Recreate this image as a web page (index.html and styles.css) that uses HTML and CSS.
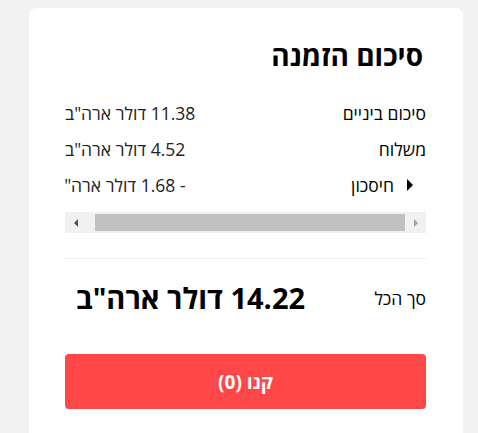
FILE: index.html
```html
<!DOCTYPE html>
<html lang="he" dir="rtl">
<head>
<meta charset="utf-8">
<title>סיכום הזמנה</title>
<link rel="stylesheet" href="styles.css">
</head>
<body>
<div class="card">
  <h2 class="title">סיכום הזמנה</h2>
  <div class="row">
    <span class="label">סיכום ביניים</span>
    <span class="value">11.38 דולר ארה"ב</span>
  </div>
  <div class="row">
    <span class="label">משלוח</span>
    <span class="value">4.52 דולר ארה"ב</span>
  </div>
  <div class="scroll">
    <div class="row wide">
      <span class="label toggle"><span class="caret"></span>חיסכון</span>
      <span class="value">- 1.68 דולר ארה"ב</span>
    </div>
  </div>
  <div class="scrollbar">
    <span class="sb-btn"><span class="arrow-left"></span></span>
    <span class="sb-track"><span class="sb-thumb"></span></span>
    <span class="sb-btn"><span class="arrow-right"></span></span>
  </div>
  <hr class="divider">
  <div class="total">
    <span class="total-label">סך הכל</span>
    <span class="total-value">14.22 דולר ארה"ב</span>
  </div>
  <button class="buy">קנו (0)</button>
</div>
</body>
</html>
```

FILE: styles.css
```css
* { box-sizing: border-box; }

body {
  margin: 0;
  background: #f2f2f2;
  font-family: "Open Sans", "DejaVu Sans", sans-serif;
  direction: rtl;
  color: #000;
}

.card {
  background: #fff;
  margin: 8px 15px 0 29px;
  border-radius: 8px 8px 0 0;
  padding: 29px 37px 40px 36px;
  min-height: 440px;
}

.title {
  margin: 0 0 28px;
  padding-right: 3px;
  font-size: 28px;
  font-weight: 700;
  line-height: 36px;
}

.row {
  display: flex;
  justify-content: space-between;
  align-items: center;
  font-size: 17.5px;
  line-height: 24px;
  margin-bottom: 12px;
}

.value {
  color: #222;
}

.scroll {
  overflow: hidden;
  padding-bottom: 15px;
}

.row.wide {
  width: calc(100% + 10px);
  margin-bottom: 0;
}

.toggle {
  display: flex;
  align-items: center;
  gap: 13px;
  padding-right: 13px;
}

.caret {
  width: 0;
  height: 0;
  border-top: 6px solid transparent;
  border-bottom: 6px solid transparent;
  border-left: 6px solid #000;
}

.scrollbar {
  direction: ltr;
  display: flex;
  height: 21px;
  background: #f1f1f1;
}

.sb-btn {
  width: 21px;
  display: flex;
  align-items: center;
  justify-content: center;
}

.arrow-left {
  width: 0;
  height: 0;
  border-top: 4px solid transparent;
  border-bottom: 4px solid transparent;
  border-right: 4px solid #505050;
}

.arrow-right {
  width: 0;
  height: 0;
  border-top: 4px solid transparent;
  border-bottom: 4px solid transparent;
  border-left: 4px solid #a3a3a3;
}

.sb-track {
  flex: 1;
  display: flex;
  padding: 2px 0 2px 9px;
}

.sb-thumb {
  flex: 1;
  background: #c1c1c1;
}

.divider {
  border: 0;
  border-top: 1px solid #eeeeee;
  margin: 25px 0 0;
}

.total {
  display: grid;
  grid-template-columns: 110px 1fr;
  align-items: center;
  margin-top: 19px;
  height: 40px;
}

.total-label {
  font-size: 17.5px;
}

.total-value {
  font-size: 29px;
  font-weight: 700;
  text-align: center;
  line-height: 40px;
}

.buy {
  display: block;
  width: 100%;
  height: 55px;
  margin-top: 36px;
  border: 0;
  border-radius: 4px;
  background: #ff4747;
  color: #fff;
  font-family: inherit;
  font-size: 19px;
  font-weight: 700;
}
```
